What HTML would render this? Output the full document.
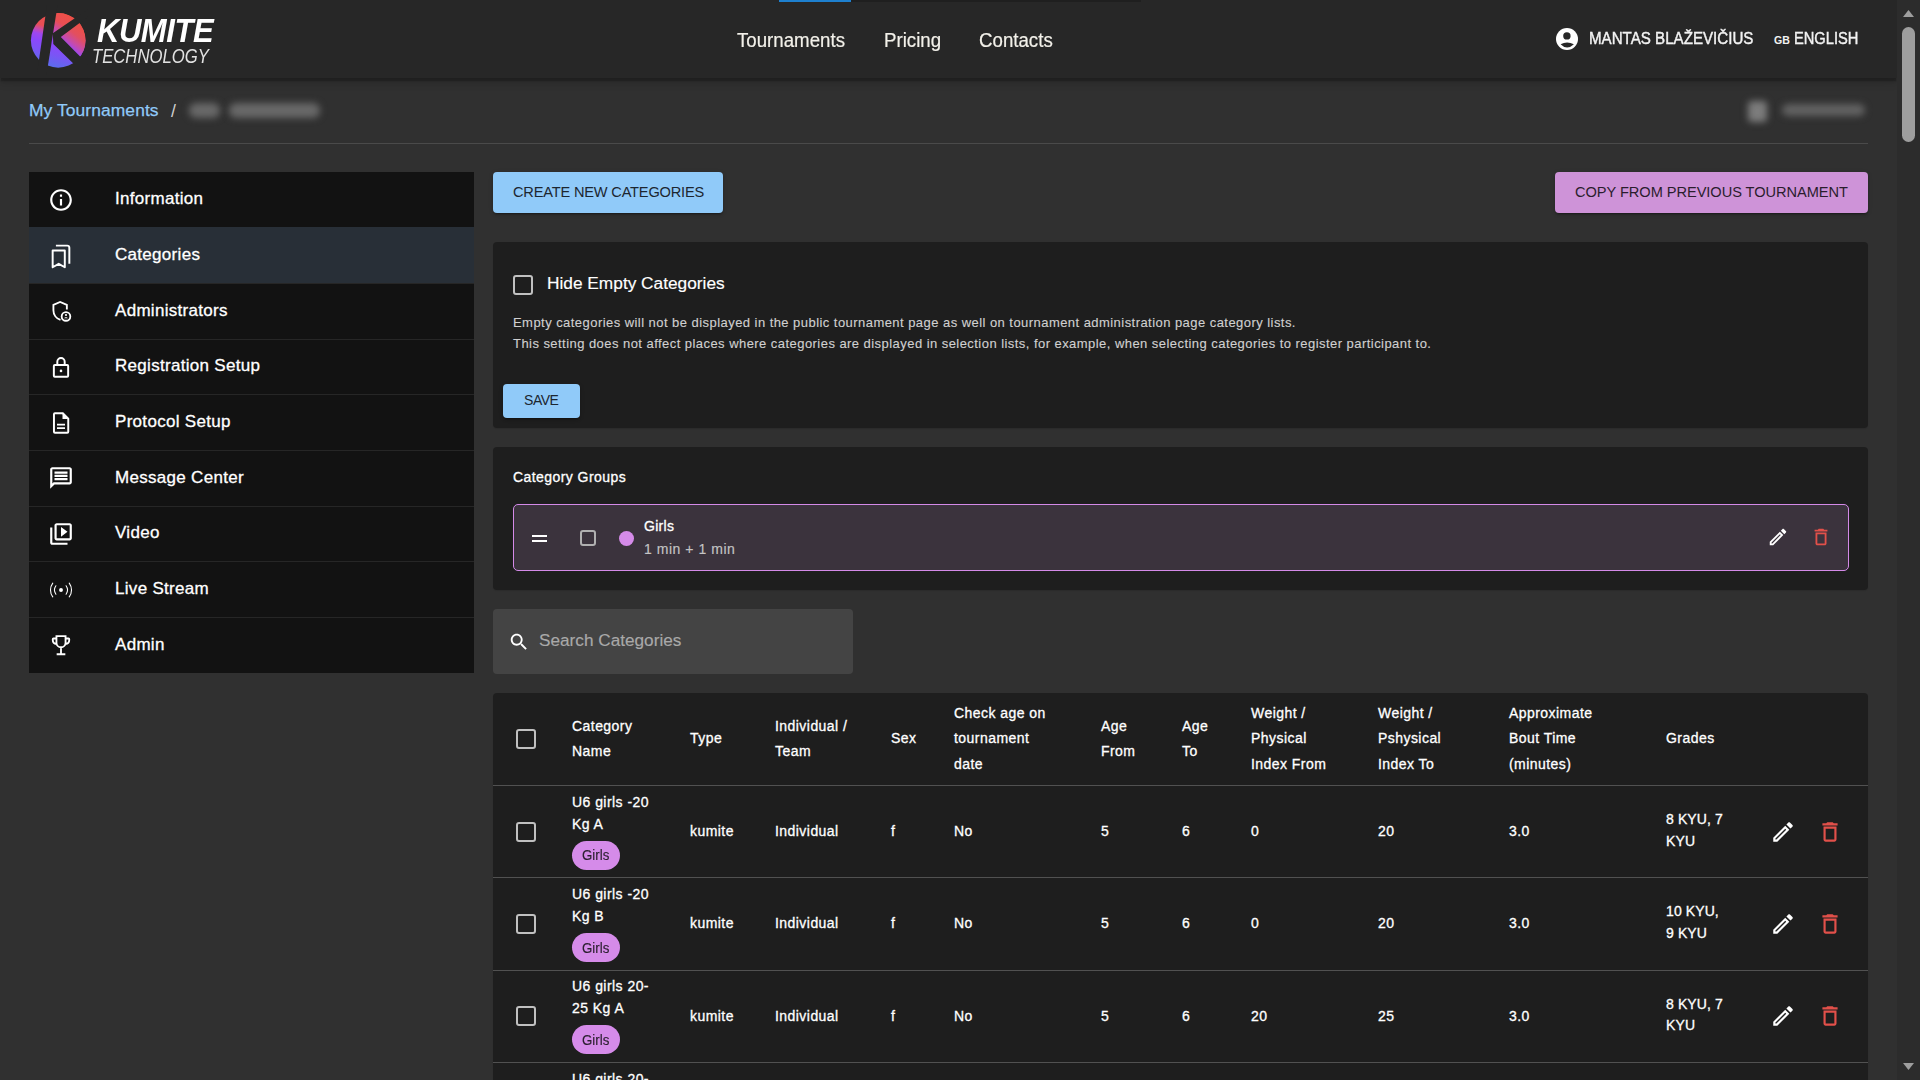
<!DOCTYPE html>
<html><head><meta charset="utf-8">
<style>
*{box-sizing:border-box;margin:0;padding:0}
html,body{width:1920px;height:1080px;overflow:hidden;background:#303030;font-family:"Liberation Sans",sans-serif;color:#fff}
.abs{position:absolute}
.t{white-space:nowrap}
#hdr{position:absolute;left:0;top:0;width:1897px;height:78px;background:#272727;box-shadow:0 4px 1px -1px rgba(0,0,0,.18),0 4px 5px 0 rgba(0,0,0,.12),0 2px 12px 0 rgba(0,0,0,.12);z-index:2}
#sb{position:absolute;left:1897px;top:0;width:23px;height:1080px;background:#2c2c2c;z-index:3}
.card{position:absolute;left:493px;width:1375px;background:#1e1e1e;border-radius:4px;box-shadow:0 1px 1px 0 rgba(0,0,0,.1)}
.btn{position:absolute;border-radius:4px;box-shadow:0 3px 1px -2px rgba(0,0,0,.2),0 2px 2px 0 rgba(0,0,0,.14),0 1px 5px 0 rgba(0,0,0,.12)}
</style></head><body>
<div id="hdr">
<svg class="abs" style="left:0;top:0" width="92" height="78" viewBox="0 0 92 78">
<defs>
<linearGradient id="lg" gradientUnits="userSpaceOnUse" x1="75" y1="15" x2="60" y2="68">
<stop offset="0" stop-color="#ee5047"/><stop offset="0.34" stop-color="#e84e55"/><stop offset="0.42" stop-color="#c84ba8"/><stop offset="0.5" stop-color="#9f47ee"/><stop offset="0.62" stop-color="#8c47fb"/><stop offset="0.8" stop-color="#7a55f5"/><stop offset="1" stop-color="#5e6aee"/>
</linearGradient>
<linearGradient id="lr" gradientUnits="userSpaceOnUse" x1="82" y1="28" x2="68" y2="46">
<stop offset="0" stop-color="#ec5048"/><stop offset="0.4" stop-color="#e24f60"/><stop offset="0.75" stop-color="#c84ba8"/><stop offset="1" stop-color="#a448e8"/>
</linearGradient>
<linearGradient id="lt" gradientUnits="userSpaceOnUse" x1="66" y1="14" x2="54" y2="32">
<stop offset="0" stop-color="#ee5047"/><stop offset="0.5" stop-color="#e84e55"/><stop offset="0.8" stop-color="#cc4ba0"/><stop offset="1" stop-color="#b44ac8"/>
</linearGradient>
<clipPath id="cc"><circle cx="58.2" cy="40.4" r="27.3"/></clipPath>
</defs>
<circle cx="58.2" cy="40.4" r="27.3" fill="url(#lg)"/>
<g clip-path="url(#cc)">
<polygon points="60.8,36.9 90,15 90,66.5" fill="url(#lr)"/>
<polygon points="57.6,5 90,5 90,7.9 52.8,33.3" fill="url(#lt)"/>
</g>
<polygon points="47.0,5 57.6,5 46.4,75 36.8,75" fill="#272727"/>
<polygon points="52.8,33.3 88,9.3 88,16.7 60.8,36.9 88,64.5 88,77.7 53.3,44.1" fill="#272727"/>
</svg>
<div class="abs t" style="left:96.5px;top:14.79px;font-size:32.5px;line-height:32.5px;color:#fff;font-weight:700;letter-spacing:-0.5px;transform:scaleX(0.955);transform-origin:0 0;font-style:italic;">KUMITE</div>
<div class="abs t" style="left:92px;top:46.78px;font-size:19.4px;line-height:19.4px;color:#e2e2e2;transform:scaleX(0.86);transform-origin:0 0;font-style:italic;">TECHNOLOGY</div>
<div class="abs t" style="left:737px;top:30.07px;font-size:20px;line-height:20px;color:#f3f1ea;-webkit-text-stroke:0.2px #f3f1ea;transform:scaleX(0.934);transform-origin:0 0;">Tournaments</div>
<div class="abs t" style="left:884px;top:30.07px;font-size:20px;line-height:20px;color:#f3f1ea;-webkit-text-stroke:0.2px #f3f1ea;transform:scaleX(0.934);transform-origin:0 0;">Pricing</div>
<div class="abs t" style="left:979px;top:30.07px;font-size:20px;line-height:20px;color:#f3f1ea;-webkit-text-stroke:0.2px #f3f1ea;transform:scaleX(0.934);transform-origin:0 0;">Contacts</div>
<svg class="abs" style="left:1554px;top:26px" width="26" height="26" viewBox="0 0 26 26"><circle cx="13" cy="13" r="11" fill="#fff"/><circle cx="12.9" cy="9.9" r="3.7" fill="#272727"/><path fill="#272727" d="M6.6 18.3Q13 14.5 19.9 18.3Q13 24.9 6.6 18.3Z"/></svg>
<div class="abs t" style="left:1589px;top:30.99px;font-size:15.6px;line-height:15.6px;color:#f2f2f2;-webkit-text-stroke:0.4px #f2f2f2;transform:scaleX(0.97);transform-origin:0 0;">MANTAS BLAŽEVIČIUS</div>
<div class="abs t" style="left:1774px;top:35.43px;font-size:10.6px;line-height:10.6px;color:#f2f2f2;font-weight:700;">GB</div>
<div class="abs t" style="left:1794px;top:30.99px;font-size:15.6px;line-height:15.6px;color:#f2f2f2;-webkit-text-stroke:0.4px #f2f2f2;transform:scaleX(0.94);transform-origin:0 0;">ENGLISH</div>
</div>
<div class="abs" style="left:779px;top:0px;width:72px;height:2px;background:#1e80cf;z-index:5"></div>
<div class="abs" style="left:851px;top:0px;width:290px;height:2px;background:#1f1f1f;z-index:5"></div>
<div id="sb"><svg class="abs" style="left:0;top:0" width="23" height="1080">
<polygon points="6,17 17,17 11.5,10" fill="#9e9e9e"/>
<rect x="5" y="27" width="13" height="115" rx="6.5" fill="#9e9e9e"/>
<polygon points="6,1063 17,1063 11.5,1070" fill="#9e9e9e"/>
</svg></div>
<div class="abs t" style="left:29px;top:101.87px;font-size:17.4px;line-height:17.4px;color:#90caf9;-webkit-text-stroke:0.25px #90caf9;letter-spacing:0.1px;">My Tournaments</div>
<div class="abs t" style="left:171px;top:103.40px;font-size:17.6px;line-height:17.6px;color:#d0d0d0;">/</div>
<div class="abs" style="left:189px;top:103px;width:31px;height:15px;border-radius:7px;background:#686868;filter:blur(3.5px)"></div>
<div class="abs" style="left:229px;top:103px;width:91px;height:15px;border-radius:7px;background:#686868;filter:blur(3.5px)"></div>
<div class="abs" style="left:1748px;top:101px;width:19px;height:21px;border-radius:4px;background:#7c7c7c;filter:blur(3.5px)"></div>
<div class="abs" style="left:1782px;top:104px;width:83px;height:12px;border-radius:6px;background:#626262;filter:blur(3.5px)"></div>
<div class="abs" style="left:29px;top:143px;width:1839px;height:1px;background:#4a4a4a"></div>
<div class="abs" style="left:29px;top:172px;width:445px;height:55px;background:#121212"></div>
<svg class="abs" style="left:48px;top:186.83px" width="26" height="26" viewBox="0 0 24 24"><path fill="#fff" d="M11 7h2v2h-2zm0 4h2v6h-2zm1-9C6.48 2 2 6.48 2 12s4.48 10 10 10 10-4.48 10-10S17.52 2 12 2zm0 18c-4.41 0-8-3.59-8-8s3.59-8 8-8 8 3.59 8 8-3.59 8-8 8z"/></svg>
<div class="abs t" style="left:115px;top:190.44px;font-size:17px;line-height:17px;color:#fff;-webkit-text-stroke:0.3px #fff;letter-spacing:0.3px;">Information</div>
<div class="abs" style="left:29px;top:227px;width:445px;height:56px;background:#282f37"></div>
<svg class="abs" style="left:48px;top:242.50px" width="26" height="26" viewBox="0 0 24 24"><path fill="none" stroke="#fff" stroke-width="1.8" stroke-linejoin="round" d="M4.3 7h11.2v15.4l-5.6-3.2-5.6 3.2z"/><path fill="none" stroke="#fff" stroke-width="1.8" d="M7.3 2.4h10.4c1.1 0 2 .9 2 2v14.8"/></svg>
<div class="abs t" style="left:115px;top:246.11px;font-size:17px;line-height:17px;color:#fff;-webkit-text-stroke:0.3px #fff;letter-spacing:0.3px;">Categories</div>
<div class="abs" style="left:29px;top:283px;width:445px;height:56px;background:#121212"></div>
<div class="abs" style="left:29px;top:283px;width:445px;height:1px;background:#262626"></div>
<svg class="abs" style="left:48px;top:298.17px" width="26" height="26" viewBox="0 0 24 24"><path fill="none" stroke="#fff" stroke-width="1.7" d="M11.5 20.2C7.6 19 5 15.4 5 11.3V6.4l6.2-2.7 6.2 2.7v4.2"/><circle cx="16.6" cy="17" r="4" fill="none" stroke="#fff" stroke-width="1.7"/><circle cx="16.6" cy="15.7" r="1" fill="#fff"/><path fill="#fff" d="M14.9 18.6c.4-.7 1-.9 1.7-.9s1.3.2 1.7.9z"/></svg>
<div class="abs t" style="left:115px;top:301.78px;font-size:17px;line-height:17px;color:#fff;-webkit-text-stroke:0.3px #fff;letter-spacing:0.3px;">Administrators</div>
<div class="abs" style="left:29px;top:339px;width:445px;height:55px;background:#121212"></div>
<div class="abs" style="left:29px;top:339px;width:445px;height:1px;background:#262626"></div>
<svg class="abs" style="left:48px;top:353.83px" width="26" height="26" viewBox="0 0 24 24"><path fill="none" stroke="#fff" stroke-width="1.8" d="M6.3 10.2h11.4c.5 0 .9.4.9.9v9c0 .5-.4.9-.9.9H6.3c-.5 0-.9-.4-.9-.9v-9c0-.5.4-.9.9-.9zM8.6 10.2V7.1c0-1.9 1.5-3.4 3.4-3.4s3.4 1.5 3.4 3.4v3.1"/><circle cx="12" cy="15.6" r="1.2" fill="#fff"/></svg>
<div class="abs t" style="left:115px;top:357.44px;font-size:17px;line-height:17px;color:#fff;-webkit-text-stroke:0.3px #fff;letter-spacing:0.3px;">Registration Setup</div>
<div class="abs" style="left:29px;top:394px;width:445px;height:56px;background:#121212"></div>
<div class="abs" style="left:29px;top:394px;width:445px;height:1px;background:#262626"></div>
<svg class="abs" style="left:48px;top:409.50px" width="26" height="26" viewBox="0 0 24 24"><path fill="none" stroke="#fff" stroke-width="1.8" d="M6.4 3h7.3l5 5v12.1c0 .5-.4.9-.9.9H6.4c-.5 0-.9-.4-.9-.9V3.9c0-.5.4-.9.9-.9z"/><path fill="#fff" d="M13.4 3v5.3h5.3z"/><path fill="#fff" d="M8.3 12.6h7.4v1.7H8.3zm0 3.3h7.4v1.7H8.3z"/></svg>
<div class="abs t" style="left:115px;top:413.11px;font-size:17px;line-height:17px;color:#fff;-webkit-text-stroke:0.3px #fff;letter-spacing:0.3px;">Protocol Setup</div>
<div class="abs" style="left:29px;top:450px;width:445px;height:56px;background:#121212"></div>
<div class="abs" style="left:29px;top:450px;width:445px;height:1px;background:#262626"></div>
<svg class="abs" style="left:48px;top:465.17px" width="26" height="26" viewBox="0 0 24 24"><path fill="#fff" d="M4 4h16v12H5.17L4 17.17V4m0-2c-1.1 0-1.99.9-1.99 2L2 22l4-4h14c1.1 0 2-.9 2-2V4c0-1.1-.9-2-2-2H4zm2 10h12v2H6v-2zm0-3h12v2H6V9zm0-3h12v2H6V6z"/></svg>
<div class="abs t" style="left:115px;top:468.78px;font-size:17px;line-height:17px;color:#fff;-webkit-text-stroke:0.3px #fff;letter-spacing:0.3px;">Message Center</div>
<div class="abs" style="left:29px;top:506px;width:445px;height:55px;background:#121212"></div>
<div class="abs" style="left:29px;top:506px;width:445px;height:1px;background:#262626"></div>
<svg class="abs" style="left:48px;top:520.83px" width="26" height="26" viewBox="0 0 24 24"><path fill="#fff" d="M4 6H2v14c0 1.1.9 2 2 2h14v-2H4V6zm16-4H8c-1.1 0-2 .9-2 2v12c0 1.1.9 2 2 2h12c1.1 0 2-.9 2-2V4c0-1.1-.9-2-2-2zm0 14H8V4h12v12zM12 5.5v9l6-4.5z"/></svg>
<div class="abs t" style="left:115px;top:524.44px;font-size:17px;line-height:17px;color:#fff;-webkit-text-stroke:0.3px #fff;letter-spacing:0.3px;">Video</div>
<div class="abs" style="left:29px;top:561px;width:445px;height:56px;background:#121212"></div>
<div class="abs" style="left:29px;top:561px;width:445px;height:1px;background:#262626"></div>
<svg class="abs" style="left:48px;top:576.50px" width="26" height="26" viewBox="0 0 24 24"><g fill="none" stroke="#fff" stroke-width="1.0" stroke-linecap="round"><path d="M4.4 5.6c-2.8 3.7-2.8 9.1 0 12.8"/><path d="M7.3 8.1c-1.6 2.3-1.6 5.5 0 7.8"/><path d="M19.6 5.6c2.8 3.7 2.8 9.1 0 12.8"/><path d="M16.7 8.1c1.6 2.3 1.6 5.5 0 7.8"/></g><circle cx="12" cy="12" r="1.8" fill="#fff"/></svg>
<div class="abs t" style="left:115px;top:580.11px;font-size:17px;line-height:17px;color:#fff;-webkit-text-stroke:0.3px #fff;letter-spacing:0.3px;">Live Stream</div>
<div class="abs" style="left:29px;top:617px;width:445px;height:56px;background:#121212"></div>
<div class="abs" style="left:29px;top:617px;width:445px;height:1px;background:#262626"></div>
<svg class="abs" style="left:48px;top:632.17px" width="26" height="26" viewBox="0 0 24 24"><path fill="none" stroke="#fff" stroke-width="1.7" d="M7.8 3.8h8.4v6.1c0 2.3-1.9 4.2-4.2 4.2s-4.2-1.9-4.2-4.2zM7.8 6H5c-.3 0-.6.3-.6.6v.8c0 2 1.5 3.6 3.5 3.7M16.2 6H19c.3 0 .6.3.6.6v.8c0 2-1.5 3.6-3.5 3.7M12 14.1v5.6M8 20.5h8"/></svg>
<div class="abs t" style="left:115px;top:635.78px;font-size:17px;line-height:17px;color:#fff;-webkit-text-stroke:0.3px #fff;letter-spacing:0.3px;">Admin</div>
<div class="btn" style="left:493px;top:172px;width:230px;height:41px;background:#90caf9"></div>
<div class="abs t" style="left:513px;top:185.34px;font-size:14.6px;line-height:14.6px;color:#1c2630;letter-spacing:-0.18px;">CREATE NEW CATEGORIES</div>
<div class="btn" style="left:1555px;top:172px;width:313px;height:41px;background:#ce93d8"></div>
<div class="abs t" style="left:1575px;top:185.34px;font-size:14.6px;line-height:14.6px;color:#2a1d2d;letter-spacing:-0.04px;">COPY FROM PREVIOUS TOURNAMENT</div>
<div class="card" style="top:242px;height:186px"></div>
<div class="abs" style="left:513px;top:275px;width:20px;height:20px;border:2px solid #c0c0c0;border-radius:3px"></div>
<div class="abs t" style="left:547px;top:275.36px;font-size:17.3px;line-height:17.3px;color:#fff;-webkit-text-stroke:0.15px #fff;">Hide Empty Categories</div>
<div class="abs t" style="left:513px;top:316.00px;font-size:13px;line-height:13px;color:#d0d0d0;-webkit-text-stroke:0.12px #d0d0d0;letter-spacing:0.45px;">Empty categories will not be displayed in the public tournament page as well on tournament administration page category lists.</div>
<div class="abs t" style="left:513px;top:337.30px;font-size:13px;line-height:13px;color:#d0d0d0;-webkit-text-stroke:0.12px #d0d0d0;letter-spacing:0.45px;">This setting does not affect places where categories are displayed in selection lists, for example, when selecting categories to register participant to.</div>
<div class="btn" style="left:503px;top:384px;width:77px;height:34px;background:#90caf9"></div>
<div class="abs t" style="left:524px;top:393.15px;font-size:14px;line-height:14px;color:#1c2630;letter-spacing:-0.45px;">SAVE</div>
<div class="card" style="top:447px;height:143px"></div>
<div class="abs t" style="left:513px;top:469.75px;font-size:14px;line-height:14px;color:#fff;-webkit-text-stroke:0.3px #fff;letter-spacing:0.43px;">Category Groups</div>
<div class="abs" style="left:513px;top:504px;width:1336px;height:67px;background:#3b333d;border:1.5px solid #d48ae8;border-radius:5px"></div>
<div class="abs" style="left:532px;top:534.5px;width:15px;height:2px;background:#fff"></div>
<div class="abs" style="left:532px;top:539.5px;width:15px;height:2px;background:#fff"></div>
<div class="abs" style="left:580px;top:530px;width:16px;height:16px;border:2px solid #b0b0b0;border-radius:3px"></div>
<div class="abs" style="left:618.5px;top:530.5px;width:15px;height:15px;background:#d58be9;border-radius:50%"></div>
<div class="abs t" style="left:644px;top:518.65px;font-size:14px;line-height:14px;color:#fff;-webkit-text-stroke:0.3px #fff;letter-spacing:0.3px;">Girls</div>
<div class="abs t" style="left:644px;top:541.55px;font-size:14px;line-height:14px;color:#c4c4c4;-webkit-text-stroke:0.15px #c4c4c4;letter-spacing:0.54px;">1 min + 1 min</div>
<svg class="abs" style="left:1767px;top:526px" width="22" height="22" viewBox="0 0 24 24"><path fill="#fff" d="M3 17.25V21h3.75L17.81 9.94l-3.75-3.75L3 17.25zM5.92 19H5v-.92l9.06-9.06.92.92L5.92 19zM20.71 5.63l-2.34-2.34c-.2-.2-.45-.29-.71-.29s-.51.1-.7.29l-1.83 1.83 3.75 3.75 1.83-1.83c.39-.39.39-1.02 0-1.41z"/></svg>
<svg class="abs" style="left:1810px;top:526px" width="22" height="22" viewBox="0 0 24 24"><path fill="#e2504a" d="M16 9v10H8V9h8m-1.5-6h-5l-1 1H5v2h14V4h-3.5l-1-1zM18 7H6v12c0 1.1.9 2 2 2h8c1.1 0 2-.9 2-2V7z"/></svg>
<div class="abs" style="left:493px;top:609px;width:360px;height:65px;background:#444444;border-radius:4px"></div>
<svg class="abs" style="left:508px;top:631px" width="22" height="22" viewBox="0 0 24 24"><path fill="#fff" d="M15.5 14h-.79l-.28-.27C15.41 12.59 16 11.110 16 9.5 16 5.91 13.09 3 9.5 3S3 5.91 3 9.5 5.91 16 9.5 16c1.61 0 3.09-.59 4.23-1.570l.27.28v.79l5 4.99L20.49 19l-4.99-5zm-6 0C7.01 14 5 11.99 5 9.5S7.01 5 9.5 5 14 7.01 14 9.5 11.99 14 9.5 14z"/></svg>
<div class="abs t" style="left:539px;top:632.44px;font-size:17.2px;line-height:17.2px;color:#a9a9a9;-webkit-text-stroke:0.15px #a9a9a9;">Search Categories</div>
<div class="card" style="top:693px;height:420px"></div>
<div class="abs" style="left:516px;top:729px;width:20px;height:20px;border:2px solid #c0c0c0;border-radius:3px"></div>
<div class="abs t" style="left:572px;top:713.55px;font-size:14px;line-height:25.7px;color:#fff;-webkit-text-stroke:0.3px #fff;letter-spacing:0.45px;">Category<br>Name</div>
<div class="abs t" style="left:690px;top:726.40px;font-size:14px;line-height:25.7px;color:#fff;-webkit-text-stroke:0.3px #fff;letter-spacing:0.45px;">Type</div>
<div class="abs t" style="left:775px;top:713.55px;font-size:14px;line-height:25.7px;color:#fff;-webkit-text-stroke:0.3px #fff;letter-spacing:0.45px;">Individual /<br>Team</div>
<div class="abs t" style="left:891px;top:726.40px;font-size:14px;line-height:25.7px;color:#fff;-webkit-text-stroke:0.3px #fff;letter-spacing:0.45px;">Sex</div>
<div class="abs t" style="left:954px;top:700.70px;font-size:14px;line-height:25.7px;color:#fff;-webkit-text-stroke:0.3px #fff;letter-spacing:0.45px;">Check age on<br>tournament<br>date</div>
<div class="abs t" style="left:1101px;top:713.55px;font-size:14px;line-height:25.7px;color:#fff;-webkit-text-stroke:0.3px #fff;letter-spacing:0.45px;">Age<br>From</div>
<div class="abs t" style="left:1182px;top:713.55px;font-size:14px;line-height:25.7px;color:#fff;-webkit-text-stroke:0.3px #fff;letter-spacing:0.45px;">Age<br>To</div>
<div class="abs t" style="left:1251px;top:700.70px;font-size:14px;line-height:25.7px;color:#fff;-webkit-text-stroke:0.3px #fff;letter-spacing:0.45px;">Weight /<br>Physical<br>Index From</div>
<div class="abs t" style="left:1378px;top:700.70px;font-size:14px;line-height:25.7px;color:#fff;-webkit-text-stroke:0.3px #fff;letter-spacing:0.45px;">Weight /<br>Pshysical<br>Index To</div>
<div class="abs t" style="left:1509px;top:700.70px;font-size:14px;line-height:25.7px;color:#fff;-webkit-text-stroke:0.3px #fff;letter-spacing:0.45px;">Approximate<br>Bout Time<br>(minutes)</div>
<div class="abs t" style="left:1666px;top:726.40px;font-size:14px;line-height:25.7px;color:#fff;-webkit-text-stroke:0.3px #fff;letter-spacing:0.45px;">Grades</div>
<div class="abs" style="left:493px;top:785px;width:1375px;height:1px;background:#515151"></div>
<div class="abs" style="left:516px;top:822px;width:20px;height:20px;border:2px solid #c0c0c0;border-radius:3px"></div>
<div class="abs t" style="left:572px;top:791.85px;font-size:14px;line-height:21.8px;color:#fff;-webkit-text-stroke:0.3px #fff;letter-spacing:0.45px;">U6 girls -20<br>Kg A</div>
<div class="abs" style="left:572px;top:841px;width:48px;height:29px;background:#d58be9;border-radius:14.5px"></div>
<div class="abs t" style="left:582px;top:848.20px;font-size:14.3px;line-height:14.3px;color:#2a1f2e;-webkit-text-stroke:0.15px #2a1f2e;transform:scaleX(0.93);transform-origin:0 0;">Girls</div>
<div class="abs t" style="left:690px;top:823.95px;font-size:14px;line-height:14px;color:#fff;-webkit-text-stroke:0.3px #fff;letter-spacing:0.45px;">kumite</div>
<div class="abs t" style="left:775px;top:823.95px;font-size:14px;line-height:14px;color:#fff;-webkit-text-stroke:0.3px #fff;letter-spacing:0.45px;">Individual</div>
<div class="abs t" style="left:891px;top:823.95px;font-size:14px;line-height:14px;color:#fff;-webkit-text-stroke:0.3px #fff;letter-spacing:0.45px;">f</div>
<div class="abs t" style="left:954px;top:823.95px;font-size:14px;line-height:14px;color:#fff;-webkit-text-stroke:0.3px #fff;letter-spacing:0.45px;">No</div>
<div class="abs t" style="left:1101px;top:823.95px;font-size:14px;line-height:14px;color:#fff;-webkit-text-stroke:0.3px #fff;letter-spacing:0.45px;">5</div>
<div class="abs t" style="left:1182px;top:823.95px;font-size:14px;line-height:14px;color:#fff;-webkit-text-stroke:0.3px #fff;letter-spacing:0.45px;">6</div>
<div class="abs t" style="left:1251px;top:823.95px;font-size:14px;line-height:14px;color:#fff;-webkit-text-stroke:0.3px #fff;letter-spacing:0.45px;">0</div>
<div class="abs t" style="left:1378px;top:823.95px;font-size:14px;line-height:14px;color:#fff;-webkit-text-stroke:0.3px #fff;letter-spacing:0.45px;">20</div>
<div class="abs t" style="left:1509px;top:823.95px;font-size:14px;line-height:14px;color:#fff;-webkit-text-stroke:0.3px #fff;letter-spacing:0.45px;">3.0</div>
<div class="abs t" style="left:1666px;top:809.15px;font-size:14px;line-height:21.6px;color:#fff;-webkit-text-stroke:0.3px #fff;letter-spacing:0.1px;">8 KYU, 7<br>KYU</div>
<svg class="abs" style="left:1770px;top:819px" width="26" height="26" viewBox="0 0 24 24"><path fill="#fff" d="M3 17.25V21h3.75L17.81 9.94l-3.75-3.75L3 17.25zM5.92 19H5v-.92l9.06-9.06.92.92L5.92 19zM20.71 5.63l-2.34-2.34c-.2-.2-.45-.29-.71-.29s-.51.1-.7.29l-1.83 1.83 3.75 3.75 1.83-1.83c.39-.39.39-1.02 0-1.41z"/></svg>
<svg class="abs" style="left:1817px;top:819px" width="26" height="26" viewBox="0 0 24 24"><path fill="#e2504a" d="M16 9v10H8V9h8m-1.5-6h-5l-1 1H5v2h14V4h-3.5l-1-1zM18 7H6v12c0 1.1.9 2 2 2h8c1.1 0 2-.9 2-2V7z"/></svg>
<div class="abs" style="left:493px;top:877px;width:1375px;height:1px;background:#515151"></div>
<div class="abs" style="left:516px;top:914px;width:20px;height:20px;border:2px solid #c0c0c0;border-radius:3px"></div>
<div class="abs t" style="left:572px;top:884.15px;font-size:14px;line-height:21.8px;color:#fff;-webkit-text-stroke:0.3px #fff;letter-spacing:0.45px;">U6 girls -20<br>Kg B</div>
<div class="abs" style="left:572px;top:933px;width:48px;height:29px;background:#d58be9;border-radius:14.5px"></div>
<div class="abs t" style="left:582px;top:940.50px;font-size:14.3px;line-height:14.3px;color:#2a1f2e;-webkit-text-stroke:0.15px #2a1f2e;transform:scaleX(0.93);transform-origin:0 0;">Girls</div>
<div class="abs t" style="left:690px;top:916.25px;font-size:14px;line-height:14px;color:#fff;-webkit-text-stroke:0.3px #fff;letter-spacing:0.45px;">kumite</div>
<div class="abs t" style="left:775px;top:916.25px;font-size:14px;line-height:14px;color:#fff;-webkit-text-stroke:0.3px #fff;letter-spacing:0.45px;">Individual</div>
<div class="abs t" style="left:891px;top:916.25px;font-size:14px;line-height:14px;color:#fff;-webkit-text-stroke:0.3px #fff;letter-spacing:0.45px;">f</div>
<div class="abs t" style="left:954px;top:916.25px;font-size:14px;line-height:14px;color:#fff;-webkit-text-stroke:0.3px #fff;letter-spacing:0.45px;">No</div>
<div class="abs t" style="left:1101px;top:916.25px;font-size:14px;line-height:14px;color:#fff;-webkit-text-stroke:0.3px #fff;letter-spacing:0.45px;">5</div>
<div class="abs t" style="left:1182px;top:916.25px;font-size:14px;line-height:14px;color:#fff;-webkit-text-stroke:0.3px #fff;letter-spacing:0.45px;">6</div>
<div class="abs t" style="left:1251px;top:916.25px;font-size:14px;line-height:14px;color:#fff;-webkit-text-stroke:0.3px #fff;letter-spacing:0.45px;">0</div>
<div class="abs t" style="left:1378px;top:916.25px;font-size:14px;line-height:14px;color:#fff;-webkit-text-stroke:0.3px #fff;letter-spacing:0.45px;">20</div>
<div class="abs t" style="left:1509px;top:916.25px;font-size:14px;line-height:14px;color:#fff;-webkit-text-stroke:0.3px #fff;letter-spacing:0.45px;">3.0</div>
<div class="abs t" style="left:1666px;top:901.45px;font-size:14px;line-height:21.6px;color:#fff;-webkit-text-stroke:0.3px #fff;letter-spacing:0.1px;">10 KYU,<br>9 KYU</div>
<svg class="abs" style="left:1770px;top:911px" width="26" height="26" viewBox="0 0 24 24"><path fill="#fff" d="M3 17.25V21h3.75L17.81 9.94l-3.75-3.75L3 17.25zM5.92 19H5v-.92l9.06-9.06.92.92L5.92 19zM20.71 5.63l-2.34-2.34c-.2-.2-.45-.29-.71-.29s-.51.1-.7.29l-1.83 1.83 3.75 3.75 1.83-1.83c.39-.39.39-1.02 0-1.41z"/></svg>
<svg class="abs" style="left:1817px;top:911px" width="26" height="26" viewBox="0 0 24 24"><path fill="#e2504a" d="M16 9v10H8V9h8m-1.5-6h-5l-1 1H5v2h14V4h-3.5l-1-1zM18 7H6v12c0 1.1.9 2 2 2h8c1.1 0 2-.9 2-2V7z"/></svg>
<div class="abs" style="left:493px;top:970px;width:1375px;height:1px;background:#515151"></div>
<div class="abs" style="left:516px;top:1006px;width:20px;height:20px;border:2px solid #c0c0c0;border-radius:3px"></div>
<div class="abs t" style="left:572px;top:976.45px;font-size:14px;line-height:21.8px;color:#fff;-webkit-text-stroke:0.3px #fff;letter-spacing:0.45px;">U6 girls 20-<br>25 Kg A</div>
<div class="abs" style="left:572px;top:1025px;width:48px;height:29px;background:#d58be9;border-radius:14.5px"></div>
<div class="abs t" style="left:582px;top:1032.80px;font-size:14.3px;line-height:14.3px;color:#2a1f2e;-webkit-text-stroke:0.15px #2a1f2e;transform:scaleX(0.93);transform-origin:0 0;">Girls</div>
<div class="abs t" style="left:690px;top:1008.55px;font-size:14px;line-height:14px;color:#fff;-webkit-text-stroke:0.3px #fff;letter-spacing:0.45px;">kumite</div>
<div class="abs t" style="left:775px;top:1008.55px;font-size:14px;line-height:14px;color:#fff;-webkit-text-stroke:0.3px #fff;letter-spacing:0.45px;">Individual</div>
<div class="abs t" style="left:891px;top:1008.55px;font-size:14px;line-height:14px;color:#fff;-webkit-text-stroke:0.3px #fff;letter-spacing:0.45px;">f</div>
<div class="abs t" style="left:954px;top:1008.55px;font-size:14px;line-height:14px;color:#fff;-webkit-text-stroke:0.3px #fff;letter-spacing:0.45px;">No</div>
<div class="abs t" style="left:1101px;top:1008.55px;font-size:14px;line-height:14px;color:#fff;-webkit-text-stroke:0.3px #fff;letter-spacing:0.45px;">5</div>
<div class="abs t" style="left:1182px;top:1008.55px;font-size:14px;line-height:14px;color:#fff;-webkit-text-stroke:0.3px #fff;letter-spacing:0.45px;">6</div>
<div class="abs t" style="left:1251px;top:1008.55px;font-size:14px;line-height:14px;color:#fff;-webkit-text-stroke:0.3px #fff;letter-spacing:0.45px;">20</div>
<div class="abs t" style="left:1378px;top:1008.55px;font-size:14px;line-height:14px;color:#fff;-webkit-text-stroke:0.3px #fff;letter-spacing:0.45px;">25</div>
<div class="abs t" style="left:1509px;top:1008.55px;font-size:14px;line-height:14px;color:#fff;-webkit-text-stroke:0.3px #fff;letter-spacing:0.45px;">3.0</div>
<div class="abs t" style="left:1666px;top:993.75px;font-size:14px;line-height:21.6px;color:#fff;-webkit-text-stroke:0.3px #fff;letter-spacing:0.1px;">8 KYU, 7<br>KYU</div>
<svg class="abs" style="left:1770px;top:1003px" width="26" height="26" viewBox="0 0 24 24"><path fill="#fff" d="M3 17.25V21h3.75L17.81 9.94l-3.75-3.75L3 17.25zM5.92 19H5v-.92l9.06-9.06.92.92L5.92 19zM20.71 5.63l-2.34-2.34c-.2-.2-.45-.29-.71-.29s-.51.1-.7.29l-1.83 1.83 3.75 3.75 1.83-1.83c.39-.39.39-1.02 0-1.41z"/></svg>
<svg class="abs" style="left:1817px;top:1003px" width="26" height="26" viewBox="0 0 24 24"><path fill="#e2504a" d="M16 9v10H8V9h8m-1.5-6h-5l-1 1H5v2h14V4h-3.5l-1-1zM18 7H6v12c0 1.1.9 2 2 2h8c1.1 0 2-.9 2-2V7z"/></svg>
<div class="abs" style="left:493px;top:1062px;width:1375px;height:1px;background:#515151"></div>
<div class="abs" style="left:516px;top:1099px;width:20px;height:20px;border:2px solid #c0c0c0;border-radius:3px"></div>
<div class="abs t" style="left:572px;top:1068.75px;font-size:14px;line-height:21.8px;color:#fff;-webkit-text-stroke:0.3px #fff;letter-spacing:0.45px;">U6 girls 20-<br>25 Kg B</div>
<div class="abs" style="left:572px;top:1118px;width:48px;height:29px;background:#d58be9;border-radius:14.5px"></div>
<div class="abs t" style="left:582px;top:1125.10px;font-size:14.3px;line-height:14.3px;color:#2a1f2e;-webkit-text-stroke:0.15px #2a1f2e;transform:scaleX(0.93);transform-origin:0 0;">Girls</div>
<div class="abs t" style="left:690px;top:1100.85px;font-size:14px;line-height:14px;color:#fff;-webkit-text-stroke:0.3px #fff;letter-spacing:0.45px;">kumite</div>
<div class="abs t" style="left:775px;top:1100.85px;font-size:14px;line-height:14px;color:#fff;-webkit-text-stroke:0.3px #fff;letter-spacing:0.45px;">Individual</div>
<div class="abs t" style="left:891px;top:1100.85px;font-size:14px;line-height:14px;color:#fff;-webkit-text-stroke:0.3px #fff;letter-spacing:0.45px;">f</div>
<div class="abs t" style="left:954px;top:1100.85px;font-size:14px;line-height:14px;color:#fff;-webkit-text-stroke:0.3px #fff;letter-spacing:0.45px;">No</div>
<div class="abs t" style="left:1101px;top:1100.85px;font-size:14px;line-height:14px;color:#fff;-webkit-text-stroke:0.3px #fff;letter-spacing:0.45px;">5</div>
<div class="abs t" style="left:1182px;top:1100.85px;font-size:14px;line-height:14px;color:#fff;-webkit-text-stroke:0.3px #fff;letter-spacing:0.45px;">6</div>
<div class="abs t" style="left:1251px;top:1100.85px;font-size:14px;line-height:14px;color:#fff;-webkit-text-stroke:0.3px #fff;letter-spacing:0.45px;">20</div>
<div class="abs t" style="left:1378px;top:1100.85px;font-size:14px;line-height:14px;color:#fff;-webkit-text-stroke:0.3px #fff;letter-spacing:0.45px;">25</div>
<div class="abs t" style="left:1509px;top:1100.85px;font-size:14px;line-height:14px;color:#fff;-webkit-text-stroke:0.3px #fff;letter-spacing:0.45px;">3.0</div>
<div class="abs t" style="left:1666px;top:1086.05px;font-size:14px;line-height:21.6px;color:#fff;-webkit-text-stroke:0.3px #fff;letter-spacing:0.1px;">10 KYU,<br>9 KYU</div>
<svg class="abs" style="left:1770px;top:1096px" width="26" height="26" viewBox="0 0 24 24"><path fill="#fff" d="M3 17.25V21h3.75L17.81 9.94l-3.75-3.75L3 17.25zM5.92 19H5v-.92l9.06-9.06.92.92L5.92 19zM20.71 5.63l-2.34-2.34c-.2-.2-.45-.29-.71-.29s-.51.1-.7.29l-1.83 1.83 3.75 3.75 1.83-1.83c.39-.39.39-1.02 0-1.41z"/></svg>
<svg class="abs" style="left:1817px;top:1096px" width="26" height="26" viewBox="0 0 24 24"><path fill="#e2504a" d="M16 9v10H8V9h8m-1.5-6h-5l-1 1H5v2h14V4h-3.5l-1-1zM18 7H6v12c0 1.1.9 2 2 2h8c1.1 0 2-.9 2-2V7z"/></svg>
<div class="abs" style="left:493px;top:1154px;width:1375px;height:1px;background:#515151"></div>
</body></html>
